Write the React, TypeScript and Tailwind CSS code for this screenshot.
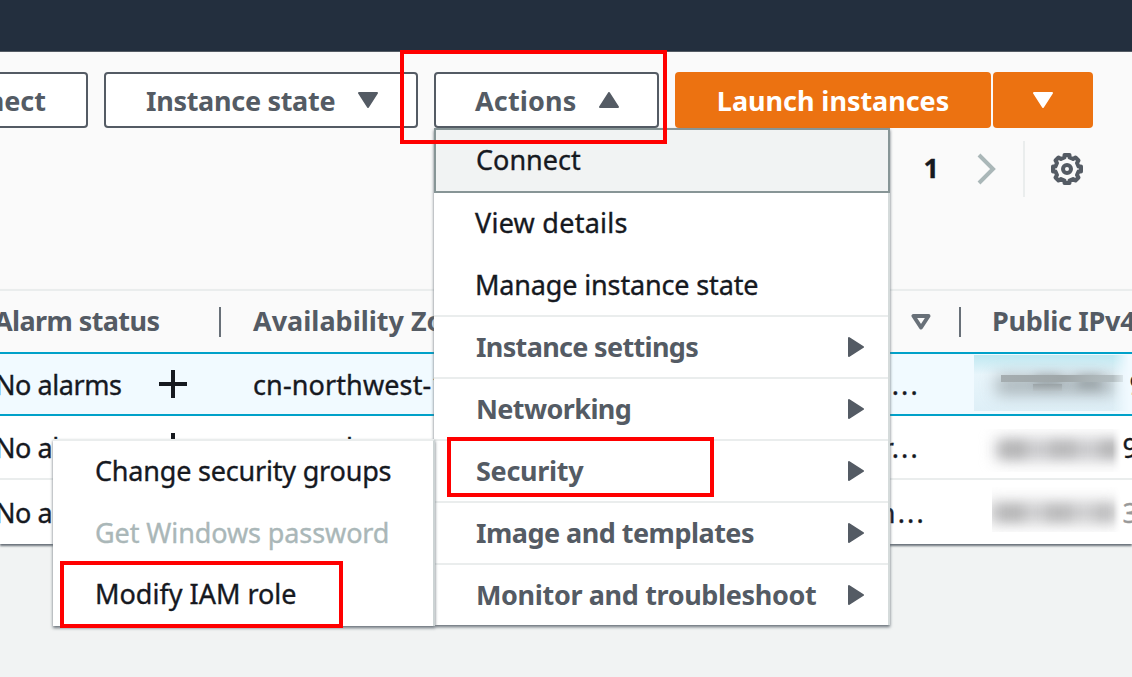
import React from "react";

type MenuGroup = { label: string; tracking: string };

const groups: MenuGroup[] = [
  { label: "Instance settings", tracking: "tracking-[-0.67px]" },
  { label: "Networking", tracking: "tracking-[-0.6px]" },
  { label: "Security", tracking: "tracking-[-0.3px]" },
  { label: "Image and templates", tracking: "tracking-[-0.52px]" },
  { label: "Monitor and troubleshoot", tracking: "tracking-[-0.36px]" },
];

function Caret({ className }: { className?: string }) {
  return (
    <svg viewBox="0 0 20 16" className={`h-4 w-5 shrink-0 ${className ?? ""}`} fill="currentColor" stroke="currentColor" strokeWidth="2" strokeLinejoin="round">
      <path d="M1 1h18L10 15z" />
    </svg>
  );
}

function Gear() {
  return (
    <svg viewBox="0 0 32 32" className="h-8 w-8 shrink-0" fill="none" stroke="#545b64" strokeWidth="4" strokeLinejoin="round">
      <path d="M13.500 2h5v2.500l3.500 1.500L24.500 4.500L27.500 7.500L26 10L27.500 13.500h2.500v5h-2.500l-1.500 3.500L27.500 24.500L24.500 27.500L22 26L18.500 27.500v2.500h-5v-2.500l-3.500-1.500L7.500 27.500L4.500 24.500L6 22L4.500 18.500H2v-5h2.500l1.500-3.500L4.500 7.500L7.500 4.500L10 6L13.500 4.500z" />
      <circle cx="16" cy="16" r="4" />
    </svg>
  );
}

function Plus() {
  return (
    <svg viewBox="0 0 28 28" className="h-7 w-7 shrink-0" stroke="#16191f" strokeWidth="4">
      <path d="M14 0v28M0 14h28" />
    </svg>
  );
}

type RowProps = { tail: string; tailWidth: string; last: string; lastClass: string; className: string };

function Row({ tail, tailWidth, last, lastClass, className }: RowProps) {
  return (
    <div className={`flex h-[64px] shrink-0 items-center ${className}`}>
      <div className="-ml-[5px] w-[164px] shrink-0 tracking-[-0.45px]">No alarms</div>
      <Plus />
      <div className="ml-[66px] w-[200px] shrink-0 tracking-[0.12px]">cn-northwest-1</div>
      <div className={`shrink-0 text-right tracking-[2.2px] ${tailWidth}`}>{tail}</div>
      <div className={`ml-auto shrink-0 ${lastClass}`}>{last}</div>
    </div>
  );
}

export default function App() {
  return (
    <div className="relative flex h-[677px] w-[1132px] flex-col overflow-hidden bg-[#f1f3f3] font-['Noto_Sans',sans-serif] text-[27px] leading-none whitespace-nowrap text-[#16191f] [-webkit-text-stroke:0.35px]">
      <header className="h-[52px] shrink-0 border-b border-[#545b64] bg-[#232f3e]" />

      <section className="flex h-[237px] shrink-0 flex-col bg-[#fafafa] pt-5">
        <div className="flex h-14 shrink-0 font-bold text-[#545b64] [-webkit-text-stroke:0px]">
          <button className="mr-4 flex w-[88px] shrink-0 items-center justify-end rounded-r-[4px] border-2 border-l-0 border-[#545b64] bg-white pr-10">Connect</button>
          <button className="mr-4 flex w-[314px] shrink-0 items-center justify-between rounded-[4px] border-2 border-[#545b64] bg-white pr-[38px] pl-10 tracking-[-0.3px]">
            Instance state <Caret />
          </button>
          <button className="mr-4 flex w-[225px] shrink-0 items-center justify-between rounded-[4px] border-2 border-[#545b64] bg-white pr-[38px] pl-[39px] tracking-[0.15px]">
            Actions <Caret className="rotate-180" />
          </button>
          <button className="mr-[2px] flex w-[316px] shrink-0 items-center justify-center rounded-[4px] bg-[#ec7211] text-white tracking-[-0.05px]">Launch instances</button>
          <button className="flex w-[100px] shrink-0 items-center justify-center rounded-[4px] bg-[#ec7211] text-white">
            <Caret />
          </button>
        </div>
        <div className="mt-3 flex h-14 items-center justify-end pt-px pr-[49px]">
          <span className="mr-[37px] pb-[2px] font-bold">1</span>
          <svg viewBox="0 0 20 32" className="mr-[27px] h-8 w-5" fill="none" stroke="#aab7b8" strokeWidth="4">
            <path d="M3 2l14 14L3 30" />
          </svg>
          <div className="mr-[26px] h-14 w-[2px] bg-[#eaeded]" />
          <Gear />
        </div>
      </section>

      <section className="flex shrink-0 flex-col overflow-x-clip shadow-[0_2px_2px_#687078]">
        <div className="flex h-[63px] items-center border-t-2 border-[#eaeded] bg-[#fafafa] font-bold text-[#545b64] [-webkit-text-stroke:0px]">
          <div className="-ml-[6px] w-[225px] shrink-0 pb-[2px] tracking-[-0.6px]">Alarm status</div>
          <div className="h-[30px] w-[2px] shrink-0 bg-[#687078]" />
          <div className="ml-[32px] w-[658px] shrink-0 pb-[2px]">Availability Zone</div>
          <svg viewBox="0 0 20 16" className="h-4 w-5 shrink-0" fill="none" stroke="#687078" strokeWidth="4" strokeLinejoin="round">
            <path d="M2.500 2h15L10 13.500z" />
          </svg>
          <div className="ml-[28px] h-[30px] w-[2px] shrink-0 bg-[#687078]" />
          <div className="ml-[31px] shrink-0 pb-[2px] tracking-[-0.3px]">Public IPv4</div>
        </div>
        <Row tail="n..." tailWidth="w-[467px]" last="9" lastClass="-mr-[13px]" className="border-y-2 border-[#00a1c9] bg-[#f1faff]" />
        <Row tail="r..." tailWidth="w-[467px]" last="9" lastClass="-mr-[6px]" className="border-b-2 border-[#eaeded] bg-white" />
        <Row tail="n..." tailWidth="w-[473px]" last="3" lastClass="-mr-[6px] text-[#999]" className="bg-white" />
      </section>

      <div className="absolute top-[355px] left-[974px] h-[56px] w-[158px] overflow-hidden bg-gradient-to-b from-[#bfe8f1] via-[#e8f5fb] via-35% to-[#deeff7] [mask-image:linear-gradient(90deg,#000_88%,transparent_98%)]">
        <div className="absolute top-[20px] left-[22px] h-[20px] w-[118px] bg-[#858d91] opacity-60 blur-[8px]" />
        <div className="absolute top-[20px] left-[62px] h-[12px] w-[24px] bg-[#858d91]/50 blur-[5px]" />
        <div className="absolute top-[20px] left-[104px] h-[14px] w-[22px] bg-[#858d91]/50 blur-[5px]" />
        <div className="absolute top-[20px] left-[27px] h-[7px] w-[122px] bg-gradient-to-r from-[#a5adb0] via-[#9fa7a9] to-[#b8c3c7]" />
        <div className="absolute top-[29px] left-[59px] h-[7px] w-[29px] bg-gradient-to-b from-[#979fa2]/80 to-[#b8c1c5]/60" />
      </div>
      <div className="absolute top-[429px] left-[976px] h-[43px] w-[145px] overflow-hidden bg-white [mask-image:linear-gradient(90deg,#000_94%,transparent)]">
        <div className="absolute top-[10px] left-[20px] h-[21px] w-[136px] bg-[#c4c4c7] blur-[8px]" />
        <div className="absolute top-[13px] left-[24px] h-[15px] w-[26px] bg-[#aaa]/70 blur-[6px]" />
        <div className="absolute top-[13px] left-[74px] h-[14px] w-[26px] bg-[#aaa]/60 blur-[6px]" />
        <div className="absolute top-[13px] left-[124px] h-[14px] w-[18px] bg-[#aaa]/70 blur-[6px]" />
      </div>
      <div className="absolute top-[487px] left-[992px] h-[45px] w-[129px] overflow-hidden bg-white [mask-image:linear-gradient(90deg,#000_94%,transparent)]">
        <div className="absolute top-[15px] -left-1 h-[21px] w-[132px] bg-[#c8c8ca] blur-[8px]" />
        <div className="absolute top-[19px] left-[6px] h-[14px] w-[26px] bg-[#aaa]/70 blur-[6px]" />
        <div className="absolute top-[19px] left-[54px] h-[14px] w-[26px] bg-[#aaa]/60 blur-[6px]" />
        <div className="absolute top-[19px] left-[104px] h-[14px] w-[16px] bg-[#aaa]/50 blur-[6px]" />
      </div>

      <nav className="absolute top-[128px] left-[434px] flex w-[456px] flex-col border-r-2 border-r-[#d5dbdb] bg-white shadow-[0_2px_3px_#687078]">
        <div className="-mr-[2px] flex h-[65px] items-center border-2 border-[#879596] bg-[#f1f3f3] pb-[2px] pl-[40px]">Connect</div>
        <div className="flex h-[61px] items-center pb-[2px] pl-[41px] tracking-[0.25px]">View details</div>
        <div className="flex h-[61px] items-center pb-px pl-[41px] tracking-[-0.15px]">Manage instance state</div>
        {groups.map((g) => (
          <div key={g.label} className="flex h-[62px] items-center justify-between border-t-2 border-[#eaeded] pr-[22px] pl-[42px] font-bold text-[#545b64] [-webkit-text-stroke:0px]">
            <span className={`pb-[2px] ${g.tracking}`}>{g.label}</span>
            <Caret className="-rotate-90" />
          </div>
        ))}
      </nav>

      <nav className="absolute top-[439px] left-[53px] flex h-[187px] w-[382px] flex-col border-t-2 border-r-2 border-t-[#eaeded] border-r-[#ccd3d4] bg-white shadow-[0_2px_3px_#687078]">
        <div className="flex h-[62px] items-center pb-[3px] pl-[42px] tracking-[-0.2px]">Change security groups</div>
        <div className="flex h-[62px] items-center pb-[3px] pl-[42px] tracking-[-0.1px] text-[#aab7b8]">Get Windows password</div>
        <div className="flex h-[62px] items-center pb-[3px] pl-[42px]">Modify IAM role</div>
      </nav>

      <div className="absolute top-[50px] left-[400px] h-[94px] w-[267px] border-4 border-[#ff0000]" />
      <div className="absolute top-[437px] left-[447px] h-[60px] w-[267px] border-4 border-[#ff0000]" />
      <div className="absolute top-[561px] left-[60px] h-[67px] w-[283px] border-4 border-[#ff0000]" />
    </div>
  );
}
